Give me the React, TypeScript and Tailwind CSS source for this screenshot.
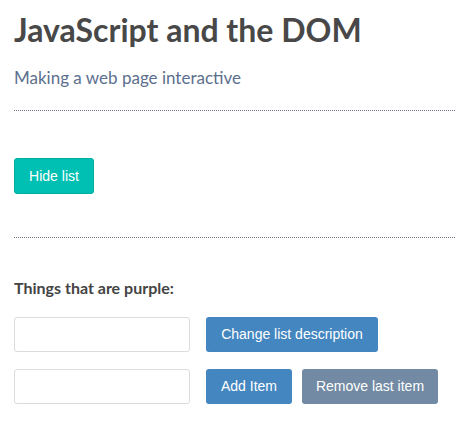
export default function App() {
  const btn =
    "h-[35px] rounded-[3px] px-0 whitespace-nowrap text-white text-[14px] font-['Liberation_Sans',Arial,sans-serif]";
  return (
    <div className="min-h-screen bg-white pl-[14px] pt-[10px] font-['Lato',sans-serif]">
      <h1 className="text-[32px] font-bold leading-[40px] text-[#484848]">
        JavaScript and the DOM
      </h1>
      <p className="mt-[18px] text-[17px] leading-[20px] text-[#5c6f8e]">
        Making a web page interactive
      </p>
      <div className="mt-[22px] border-t border-dotted border-[#6e7682]" />
      <div className="pt-[47px]">
        <button className={`${btn} h-[36px] w-[80px] bg-[#00bfb3] border border-[#00ada2]`}>
          Hide list
        </button>
      </div>
      <div className="mt-[43px] border-t border-dotted border-[#6e7682]" />
      <p className="mt-[40px] text-[16px] font-bold leading-[20px] text-[#444]">
        Things that are purple:
      </p>
      <div className="mt-[19px] flex flex-col gap-[17px]">
        <div className="flex gap-[16px]">
          <input className="h-[35px] w-[176px] rounded-[3px] border border-[#dcdcdc]" />
          <button className={`${btn} w-[172px] bg-[#4386c0]`}>Change list description</button>
        </div>
        <div className="flex gap-[16px]">
          <input className="h-[35px] w-[176px] rounded-[3px] border border-[#dcdcdc]" />
          <div className="flex gap-[10px]">
            <button className={`${btn} w-[86px] bg-[#4386c0]`}>Add Item</button>
            <button className={`${btn} w-[136px] bg-[#728aa3]`}>Remove last item</button>
          </div>
        </div>
      </div>
    </div>
  );
}
